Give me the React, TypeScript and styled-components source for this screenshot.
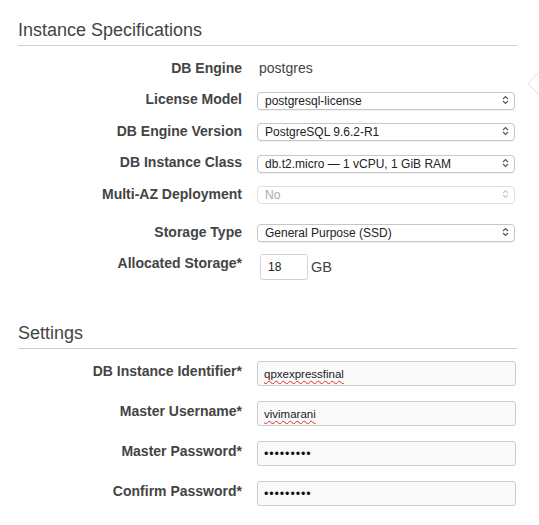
import React from "react";
import styled, { createGlobalStyle } from "styled-components";

const Global = createGlobalStyle`
  html, body { margin: 0; padding: 0; background: #fff; }
  body { font-family: "Liberation Sans", Arial, Helvetica, sans-serif; color: #444; }
  * { box-sizing: border-box; }
`;

const Page = styled.div`
  position: relative;
  width: 539px;
  height: 525px;
  overflow: hidden;
  padding-left: 18px;
`;

const Section = styled.section<{ $top: number }>`
  width: 499px;
  padding-top: ${(p) => p.$top}px;
`;

const SectionTitle = styled.h2`
  margin: 0;
  font-size: 18px;
  line-height: 22px;
  font-weight: normal;
  color: #444;
  padding-bottom: 4px;
  border-bottom: 1px solid #cfcfcf;
`;

const Rows = styled.div<{ $top: number }>`
  display: flex;
  flex-direction: column;
  padding-top: ${(p) => p.$top}px;
`;

const Row = styled.div<{ $gap?: number; $align?: string }>`
  display: grid;
  grid-template-columns: 224px 258px;
  column-gap: 15px;
  align-items: ${(p) => p.$align || "center"};
  margin-top: ${(p) => p.$gap || 0}px;
  min-height: 18px;
`;

const Label = styled.label<{ $pt?: number }>`
  text-align: right;
  font-size: 14px;
  line-height: 17px;
  font-weight: bold;
  color: #444;
  padding-top: ${(p) => p.$pt || 0}px;
  white-space: nowrap;
`;

const Value = styled.span`
  font-size: 14px;
  line-height: 17px;
  color: #444;
  padding-left: 2px;
`;

const SelectWrap = styled.div`
  position: relative;
  width: 258px;
  height: 18px;
`;

const Select = styled.select<{ disabled?: boolean }>`
  appearance: none;
  -webkit-appearance: none;
  width: 100%;
  height: 18px;
  margin: 0;
  padding: 0 20px 0 7px;
  font-family: "Liberation Sans", Arial, sans-serif;
  font-size: 12px;
  line-height: 16px;
  color: ${(p) => (p.disabled ? "#a8a8a8" : "#222")};
  background: #fff;
  border: 1px solid ${(p) => (p.disabled ? "#e0e0e0" : "#c6c6c6")};
  border-radius: 4px;
  box-shadow: ${(p) => (p.disabled ? "none" : "0 1px 1px rgba(0,0,0,0.06)")};
  outline: none;
  opacity: 1;
`;

const Arrows = styled.svg`
  position: absolute;
  right: 6px;
  top: 4px;
  pointer-events: none;
`;

const StorageBox = styled.div`
  display: flex;
  align-items: center;
  gap: 3px;
  padding-left: 3px;
`;

const SmallInput = styled.input`
  width: 48px;
  height: 26px;
  margin: 0;
  padding: 0 7px;
  font-family: "Liberation Sans", Arial, sans-serif;
  font-size: 12px;
  color: #222;
  background: #fff;
  border: 1px solid #d2d2d2;
  border-radius: 3px;
  outline: none;
`;

const Unit = styled.span`
  font-size: 14.5px;
  color: #444;
`;

const FieldBox = styled.div`
  display: flex;
  align-items: center;
  width: 259px;
  height: 25px;
  padding: 0 6px;
  font-family: "Liberation Sans", Arial, sans-serif;
  font-size: 11.5px;
  color: #222;
  background: #fafafa;
  border: 1px solid #cdcdcd;
  border-radius: 3px;
  cursor: text;
`;

const Misspelled = styled.span`
  text-decoration: underline wavy #e0302a;
  text-decoration-thickness: 1px;
  text-decoration-skip-ink: none;
  text-underline-offset: 2px;
`;

const Dots = styled.span`
  font-size: 12.5px;
  letter-spacing: 0.9px;
  color: #111;
`;

const SideChevron = styled.svg`
  position: absolute;
  right: 0;
  top: 72px;
`;

const UpDown = ({ disabled }: { disabled?: boolean }) => (
  <Arrows width="7" height="10" viewBox="0 0 7 10">
    <polyline
      points="1,4 3.5,1.5 6,4"
      fill="none"
      stroke={disabled ? "#c8c8c8" : "#555"}
      strokeWidth="1.1"
    />
    <polyline
      points="1,6 3.5,8.5 6,6"
      fill="none"
      stroke={disabled ? "#c8c8c8" : "#555"}
      strokeWidth="1.1"
    />
  </Arrows>
);

const SelectField = ({ value, disabled }: { value: string; disabled?: boolean }) => (
  <SelectWrap>
    <Select disabled={disabled} defaultValue={value}>
      <option value={value}>{value}</option>
    </Select>
    <UpDown disabled={disabled} />
  </SelectWrap>
);

export default function App() {
  return (
    <>
      <Global />
      <Page>
        <Section $top={19}>
          <SectionTitle>Instance Specifications</SectionTitle>
          <Rows $top={13}>
            <Row>
              <Label>DB Engine</Label>
              <Value>postgres</Value>
            </Row>
            <Row $gap={13.5}>
              <Label>License Model</Label>
              <SelectField value="postgresql-license" />
            </Row>
            <Row $gap={13.5}>
              <Label>DB Engine Version</Label>
              <SelectField value="PostgreSQL 9.6.2-R1" />
            </Row>
            <Row $gap={13.5}>
              <Label>DB Instance Class</Label>
              <SelectField value="db.t2.micro — 1 vCPU, 1 GiB RAM" />
            </Row>
            <Row $gap={13.5}>
              <Label>Multi-AZ Deployment</Label>
              <SelectField value="No" disabled />
            </Row>
            <Row $gap={20}>
              <Label>Storage Type</Label>
              <SelectField value="General Purpose (SSD)" />
            </Row>
            <Row $gap={13} $align="start">
              <Label $pt={1}>Allocated Storage*</Label>
              <StorageBox>
                <SmallInput readOnly value="18" />
                <Unit>GB</Unit>
              </StorageBox>
            </Row>
          </Rows>
        </Section>

        <Section $top={42}>
          <SectionTitle>Settings</SectionTitle>
          <Rows $top={12}>
            <Row $align="start">
              <Label $pt={2}>DB Instance Identifier*</Label>
              <FieldBox role="textbox">
                <Misspelled>qpxexpressfinal</Misspelled>
              </FieldBox>
            </Row>
            <Row $gap={15} $align="start">
              <Label $pt={2}>Master Username*</Label>
              <FieldBox role="textbox">
                <Misspelled>vivimarani</Misspelled>
              </FieldBox>
            </Row>
            <Row $gap={15} $align="start">
              <Label $pt={2}>Master Password*</Label>
              <FieldBox role="textbox">
                <Dots>•••••••••</Dots>
              </FieldBox>
            </Row>
            <Row $gap={15} $align="start">
              <Label $pt={2}>Confirm Password*</Label>
              <FieldBox role="textbox">
                <Dots>•••••••••</Dots>
              </FieldBox>
            </Row>
          </Rows>
        </Section>

        <SideChevron width="12" height="23" viewBox="0 0 12 23">
          <polyline points="11.5,0.5 1,11.5 11.5,22.5" fill="none" stroke="#dcdcdc" strokeWidth="1" />
        </SideChevron>
      </Page>
    </>
  );
}
